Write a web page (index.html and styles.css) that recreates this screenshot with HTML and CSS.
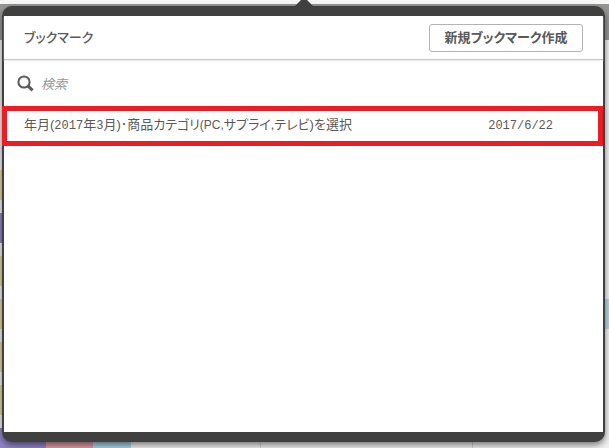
FILE: index.html
```
<!DOCTYPE html>
<html lang="ja">
<head>
	<meta charset="utf-8">
	<title>ブックマーク</title>
	<link rel="stylesheet" href="styles.css">
</head>
<body>
	<div class="sheet" aria-hidden="true">
		<div class="topbar"></div>
		<div class="toolbar"></div>
		<div class="chart">
			<div class="bar"></div>
			<div class="bar purple"></div>
			<div class="bar"></div>
			<div class="bar blue-end"></div>
			<div class="bar"></div>
			<div class="bar"></div>
			<div class="bar stacked"></div>
		</div>
	</div>

	<div class="popover">
		<svg class="arrow" viewBox="0 0 18 6" aria-hidden="true"><path d="M0 6 L6 0 H12 L18 6 Z" fill="#404040"/></svg>
		<div class="header">
			<h1>ブックマーク</h1>
			<button type="button">新規ブックマーク作成</button>
		</div>
		<div class="search">
			<svg viewBox="0 0 18 18" aria-hidden="true">
				<circle cx="7" cy="7" r="5.6" fill="none" stroke="#595959" stroke-width="2"/>
				<path d="M11.2 11.2 L15.6 15.4" stroke="#595959" stroke-width="3"/>
			</svg>
			<input type="text" placeholder="検索" aria-label="検索">
		</div>
		<ul class="bookmarks">
			<li class="selected">
				<span class="name">年月(<span class="num">2017</span>年<span class="num">3</span>月)･商品カテゴリ<span class="latin">(PC,</span>サプライ,テレビ)を選択</span>
				<span class="date">2017/6/22</span>
			</li>
		</ul>
	</div>
</body>
</html>
```

FILE: styles.css
```
* {
	box-sizing: border-box;
}

body {
	margin: 0;
	height: 100vh;
	overflow: hidden;
	position: relative;
	background-color: #f0f0f0;
	color: #595959;
	font-family: "Liberation Sans", "Noto Sans CJK JP", sans-serif;
	font-size: 13px;
	font-feature-settings: "palt";
}

/* sheet behind the popover */
.topbar {
	height: 4px;
	background-color: #f6f6f6;
}

.toolbar {
	height: 36px;
	background-color: #979695;
}

.chart {
	display: flex;
	flex-direction: column;
	gap: 13px;
	padding-top: 130px;
	background: linear-gradient(#d0d0d0, #d0d0d0) 260px 0 / 1px 100% no-repeat,
		linear-gradient(#d0d0d0, #d0d0d0) 472px 0 / 1px 100% no-repeat;
}

.bar {
	height: 30px;
	background: linear-gradient(#e2d6a4, #e2d6a4) 0 0 / 46px 100% no-repeat;
}

.bar.purple {
	background-image: linear-gradient(#9185c6, #9185c6);
}

.bar.blue-end {
	background: linear-gradient(to right, #e2d6a4 46px, #b3d5e7 46px);
}

.bar.stacked {
	background: linear-gradient(to right, #9185c6 46px, #dc9ca6 46px, #dc9ca6 93px, #acd3e5 93px, #acd3e5 131px, transparent 131px);
}

/* popover */
.popover {
	position: absolute;
	top: 6px;
	right: 4px;
	bottom: 6px;
	left: 2px;
	border: solid #404040;
	border-width: 10px 2px;
	border-radius: 10px;
	background: linear-gradient(#fff, #fff) padding-box, #404040;
	box-shadow: 0 3px 6px rgba(0, 0, 0, 0.5);
}

.arrow {
	position: absolute;
	top: -16px;
	left: 50%;
	width: 18px;
	height: 6px;
	margin-left: -9px;
}

.header {
	display: flex;
	align-items: center;
	justify-content: space-between;
	height: 44px;
	padding: 0 20px;
	border-bottom: 1px solid #c8c8c8;
	box-shadow: 0 1px 1px #eee;
}

h1 {
	margin: 0;
	font-size: 13px;
	font-weight: 500;
	line-height: 18px;
}

button {
	width: 154px;
	height: 28px;
	padding: 0 0 2px;
	border: 1px solid #b3b3b3;
	border-radius: 3px;
	background-color: #fff;
	color: #595959;
	font: bold 13px "Liberation Sans", "Noto Sans CJK JP", sans-serif;
	font-feature-settings: "palt";
}

.search {
	display: flex;
	align-items: center;
	gap: 6px;
	height: 46px;
	padding: 2px 20px 0 13px;
}

.search svg {
	width: 18px;
	height: 18px;
}

.search input {
	flex: 1;
	border: 0;
	padding: 0;
	outline: 0;
	background: none;
	font: italic 13px "Liberation Sans", "Noto Sans CJK JP", sans-serif;
}

.search input::placeholder {
	color: #999;
}

.bookmarks {
	list-style: none;
	margin: 0 0 0 -2px;
	padding: 0;
}

.bookmarks li {
	display: flex;
	align-items: baseline;
	justify-content: space-between;
	height: 40px;
	padding: 4px 45px 0 17px;
	line-height: 20px;
}

.bookmarks .selected {
	border: 5px solid #ed1c24;
}

.num,
.date {
	font-family: "Liberation Mono", monospace;
	font-size: 12px;
}

.latin {
	font-size: 12px;
}
```
